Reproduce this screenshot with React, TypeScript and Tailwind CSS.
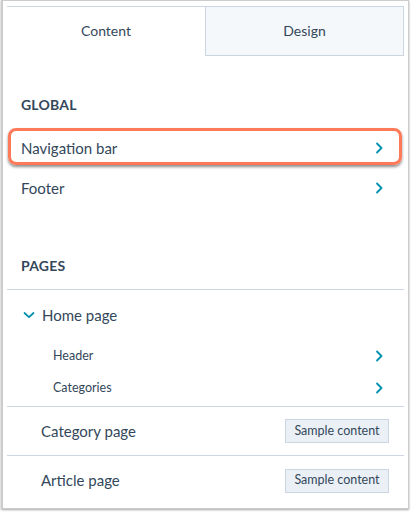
import React from "react";

const ChevronRight = () => (
  <svg width="8" height="12" viewBox="0 0 8 12" fill="none">
    <path d="M2 1.5 L6.5 6 L2 10.5" stroke="#0091ae" strokeWidth="1.8" strokeLinecap="round" strokeLinejoin="round" />
  </svg>
);

const ChevronDown = () => (
  <svg width="12" height="8" viewBox="0 0 12 8" fill="none">
    <path d="M1.5 2 L6 6.2 L10.5 2" stroke="#0091ae" strokeWidth="1.8" strokeLinecap="round" strokeLinejoin="round" />
  </svg>
);

export default function App() {
  return (
    <div className="w-[411px] h-[512px] bg-white text-[#33475b]" style={{ fontFamily: "Lato, 'Open Sans', sans-serif" }}>
      <div className="ml-[1px] w-[408px] h-[509px] border-l-2 border-t border-r border-b border-[#cccccc] shadow-[0_1px_2px_rgba(0,0,0,0.35)] pt-[5px] pl-[4px] pr-[4px]">
        {/* Tabs */}
        <div className="flex h-[50px] border-t border-[#cbd6e2]">
          <div className="w-[198px] flex items-center justify-center pb-[2px] text-[14px]">Content</div>
          <div className="flex-1 flex items-center justify-center pb-[1px] text-[14px] bg-[#f5f8fa] border-l border-b border-r border-[#cbd6e2]">Design</div>
        </div>

        {/* GLOBAL */}
        <div className="mt-[38px] h-[20px] flex items-center pl-[14px] text-[14px] font-bold tracking-[0.2px]">GLOBAL</div>

        <div className="mt-[14px] relative h-[40px] flex items-center justify-between pl-[14px] pr-[21px] text-[15px]">
          <span>Navigation bar</span>
          <ChevronRight />
          <div className="absolute left-[1px] right-[2px] top-0 h-[37px] border-[3px] border-[#ff7a59] rounded-[8px] shadow-[0_2px_3px_rgba(0,0,0,0.45)]" />
        </div>
        <div className="h-[40px] flex items-center justify-between pl-[14px] pr-[21px] text-[15px]">
          <span>Footer</span>
          <ChevronRight />
        </div>

        {/* PAGES */}
        <div className="mt-[47px] h-[20px] flex items-center pl-[14px] text-[14px] font-bold tracking-[0.2px]">PAGES</div>
        <div className="mt-[14px] border-b border-[#cbd6e2]" />

        <div className="h-[50px] flex items-center pl-[16px] text-[15px]">
          <ChevronDown />
          <span className="ml-[7px]">Home page</span>
        </div>
        <div className="h-[32px] flex items-center justify-between pl-[46px] pr-[21px] text-[12.5px]">
          <span>Header</span>
          <ChevronRight />
        </div>
        <div className="h-[32px] flex items-center justify-between pl-[46px] pr-[21px] text-[12.5px]">
          <span>Categories</span>
          <ChevronRight />
        </div>
        <div className="mt-[2px] border-b border-[#cbd6e2]" />

        <div className="h-[49px] flex items-center justify-between pl-[34px] pr-[15px] text-[15px] border-b border-[#cbd6e2]">
          <span>Category page</span>
          <span className="h-[24px] w-[104px] flex items-center justify-center text-[12.5px] bg-[#eaf0f6] border border-[#cbd6e2]">Sample content</span>
        </div>
        <div className="h-[49px] flex items-center justify-between pl-[34px] pr-[15px] text-[15px]">
          <span>Article page</span>
          <span className="h-[24px] w-[104px] flex items-center justify-center text-[12.5px] bg-[#eaf0f6] border border-[#cbd6e2]">Sample content</span>
        </div>
      </div>
    </div>
  );
}
